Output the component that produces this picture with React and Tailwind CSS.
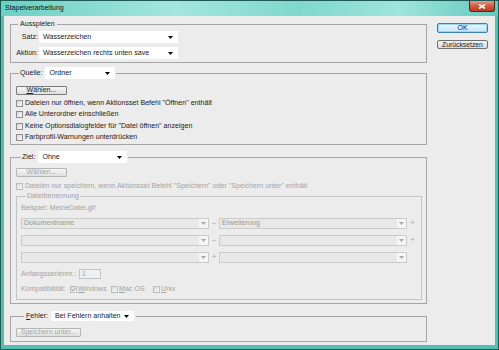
import React from 'react';

const Arrow = ({ c = '#000' }) => (
  <svg width="5" height="3" viewBox="0 0 5 3" className="shrink-0">
    <path d="M0 0H5L2.5 3Z" fill={c} />
  </svg>
);

function Select({ w, text }) {
  return (
    <div className={'flex items-center justify-between bg-white h-full pl-[4px] pr-[5px] ' + w}>
      <span className="whitespace-nowrap">{text}</span>
      <Arrow />
    </div>
  );
}

function DSelect({ text }) {
  return (
    <div className="flex items-stretch w-[188px] h-[11px] bg-[#e8e8e8] border border-[#cbcbcb]">
      <span className="flex-1 pl-[2px] text-[#9a9a9a] leading-[9px] whitespace-nowrap">{text}</span>
      <span className="w-[9px] bg-[#f5f5f5] flex items-center justify-center">
        <Arrow c="#a8a8a8" />
      </span>
    </div>
  );
}

function Check({ checked, disabled }) {
  return (
    <span
      className={
        'w-[7px] h-[7px] shrink-0 flex items-center justify-center border bg-[linear-gradient(135deg,#d8d8d8,#fbfbfb)] ' +
        (disabled ? 'border-[#bdbdbd]' : 'border-[#8f8f8f]')
      }
    >
      {checked && (
        <svg width="5" height="5" viewBox="0 0 5 5">
          <path d="M0.5 2.5L2 4L4.5 0.8" stroke="#9a9a9a" strokeWidth="1" fill="none" />
        </svg>
      )}
    </span>
  );
}

function CheckRow({ children, disabled }) {
  return (
    <div className="flex items-center gap-[2px] h-[11.5px]">
      <Check disabled={disabled} />
      <span className={'whitespace-nowrap ' + (disabled ? 'text-[#a3a3a3]' : '')}>{children}</span>
    </div>
  );
}

function Btn({ children, w, disabled }) {
  return (
    <div
      className={
        'h-[9px] flex items-center justify-center rounded-[1px] border bg-[linear-gradient(180deg,#f6f6f6,#dedede)] leading-[7px] whitespace-nowrap ' +
        w +
        (disabled ? ' border-[#b5b5b5] text-[#a3a3a3]' : ' border-[#7a7a7a]')
      }
    >
      {children}
    </div>
  );
}

export default function App() {
  return (
    <div className="w-[499px] h-[350px] flex flex-col bg-[#54c0b4] border border-[#1f5a54] font-['Liberation_Sans',Arial,sans-serif] text-[7.1px] leading-[9px] text-[#222] overflow-hidden">
      {/* title bar */}
      <div className="h-[15px] shrink-0 flex items-start justify-between bg-[linear-gradient(90deg,#6ccfc4_0%,#a3e6de_35%,#7fd8ce_60%,#9fe4dc_80%,#62cabf_100%)]">
        <span className="pl-[4px] pt-[2px] text-[7px] leading-[9px] text-[#111]">Stapelverarbeitung</span>
        <div className="mr-[3px] w-[26px] h-[11px] rounded-b-[3px] border border-t-0 border-[#5a2218] bg-[linear-gradient(180deg,#e79a8a_0%,#cf5a44_50%,#b83c26_100%)] flex items-center justify-center">
          <svg width="8" height="5" viewBox="0 0 8 5">
            <path d="M1 0.5L7 4.5M7 0.5L1 4.5" stroke="#fff" strokeWidth="1.6" />
          </svg>
        </div>
      </div>

      {/* content */}
      <div className="flex-1 mx-[3px] mb-[4px] bg-[#ececec] flex">
        <div className="pl-[6px] w-[423px] flex flex-col">
          {/* Ausspielen */}
          <fieldset className="mt-[4px] border border-[#a5a5a5] pb-[3px]">
            <legend className="ml-[7px] px-[2px] leading-[9px]">Ausspielen</legend>
            <div className="mt-[2px] flex flex-col gap-[4px]">
              <div className="flex items-center h-[12px]">
                <span className="w-[28px] text-right pr-[1px]">Satz:</span>
                <Select w="w-[139px]" text="Wasserzeichen" />
              </div>
              <div className="flex items-center h-[12px]">
                <span className="w-[28px] text-right pr-[1px]">Aktion:</span>
                <Select w="w-[139px]" text="Wasserzeichen rechts unten save" />
              </div>
            </div>
          </fieldset>

          {/* Quelle */}
          <fieldset className="mt-[4px] border border-[#a5a5a5] pl-[5px]">
            <legend className="ml-[3px] px-[1px]">
              <div className="flex items-center h-[12px] gap-[3px]">
                <span>Quelle:</span>
                <Select w="w-[70px]" text="Ordner" />
              </div>
            </legend>
            <div className="mt-[7px]">
              <Btn w="w-[51px]">
                <span className="underline">W</span>ählen...
              </Btn>
            </div>
            <div className="mt-[2.5px] flex flex-col">
              <CheckRow>Dateien nur öffnen, wenn Aktionsset Befehl "Öffnen" enthält</CheckRow>
              <CheckRow>Alle Unterordner einschließen</CheckRow>
              <CheckRow>Keine Optionsdialogfelder für "Datei öffnen" anzeigen</CheckRow>
              <CheckRow>Farbprofil-Warnungen unterdrücken</CheckRow>
            </div>
          </fieldset>

          {/* Ziel */}
          <fieldset className="mt-[6.5px] border border-[#a5a5a5] pl-[5px] pr-[4px] pb-[3px]">
            <legend className="ml-[5px] px-[1px]">
              <div className="flex items-center h-[12px] gap-[3px]">
                <span>Ziel:</span>
                <Select w="w-[89px]" text="Ohne" />
              </div>
            </legend>
            <div className="mt-[5px]">
              <Btn w="w-[51px]" disabled>
                Wählen...
              </Btn>
            </div>
            <div className="mt-[4px] flex items-center gap-[2px] h-[10px]">
              <Check disabled />
              <span className="whitespace-nowrap text-[#a3a3a3]">
                Dateien nur speichern, wenn Aktionsset Befehl "Speichern" oder "Speichern unter" enthält
              </span>
            </div>
            <fieldset className="mt-[0.5px] border border-[#c4c4c4] pl-[4px] pb-[5px] text-[#a3a3a3]">
              <legend className="ml-[5px] px-[1px] leading-[9px]">Dateibenennung</legend>
              <div className="mt-[3px] h-[9px]">Beispiel: MeineDatei.gif</div>
              <div className="mt-[5.5px] flex flex-col gap-[6px]">
                <div className="flex items-center">
                  <DSelect text="Dokumentname" />
                  <span className="w-[10px] text-center">–</span>
                  <DSelect text="Erweiterung" />
                  <span className="w-[11px] text-center">+</span>
                </div>
                <div className="flex items-center">
                  <DSelect text="" />
                  <span className="w-[10px] text-center">–</span>
                  <DSelect text="" />
                  <span className="w-[11px] text-center">+</span>
                </div>
                <div className="flex items-center">
                  <DSelect text="" />
                  <span className="w-[10px] text-center">+</span>
                  <DSelect text="" />
                </div>
              </div>
              <div className="mt-[6px] h-[10px] flex items-center">
                <span className="w-[58px] whitespace-nowrap">Anfangsseriennr.:</span>
                <span className="w-[22px] h-[10px] border border-[#c4c4c4] bg-[#f0f0f0] pl-[2px] leading-[8px]">1</span>
              </div>
              <div className="mt-[5px] h-[10px] flex items-center">
                <span className="w-[49px] whitespace-nowrap">Kompatibilität:</span>
                <Check checked disabled />
                <span className="ml-[1px] w-[33px]">
                  <span className="underline">W</span>indows
                </span>
                <Check disabled />
                <span className="ml-[1px] w-[34px]">
                  <span className="underline">M</span>ac OS
                </span>
                <Check disabled />
                <span className="ml-[1px]">
                  <span className="underline">U</span>nix
                </span>
              </div>
            </fieldset>
          </fieldset>

          {/* Fehler */}
          <fieldset className="mt-[7px] border border-[#a5a5a5] pl-[5px] pb-[4px]">
            <legend className="ml-[8px] px-[2px]">
              <div className="flex items-center h-[10px] gap-[3px]">
                <span>
                  <span className="underline">F</span>ehler:
                </span>
                <Select w="w-[83px]" text="Bei Fehlern anhalten" />
              </div>
            </legend>
            <div className="mt-[7px]">
              <Btn w="w-[65px]" disabled>
                Speichern unter...
              </Btn>
            </div>
          </fieldset>
        </div>

        {/* buttons */}
        <div className="ml-[10px] mt-[7px] flex flex-col gap-[7px]">
          <div className="w-[51px] h-[10px] flex items-center justify-center rounded-[2px] border border-[#3c7fb1] bg-[linear-gradient(180deg,#eaf6fd,#c4e5f6)] shadow-[inset_0_0_0_1px_#9fd4f1]">
            OK
          </div>
          <div className="w-[51px] h-[9px] flex items-center justify-center rounded-[2px] border border-[#707070] bg-[linear-gradient(180deg,#f2f2f2,#dcdcdc)] whitespace-nowrap text-[6.8px]">
            Zurücksetzen
          </div>
        </div>
      </div>
    </div>
  );
}
